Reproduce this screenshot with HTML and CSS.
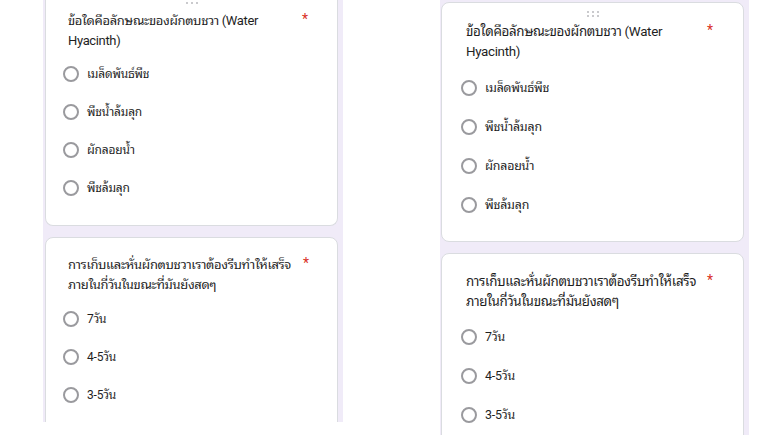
FILE: index.html
```html
<!DOCTYPE html>
<html lang="th">
<head>
<meta charset="utf-8">
<title>Google Form</title>
<link rel="stylesheet" href="styles.css">
</head>
<body>
<div class="panel panel-left">
  <div class="card card-first">
    <div class="handle"><span></span><span></span><span></span></div>
    <div class="question">
      <div class="q-text">ข้อใดคือลักษณะของผักตบชวา (Water Hyacinth)</div>
      <div class="req">*</div>
    </div>
    <div class="options">
      <div class="opt"><span class="radio"></span><span class="label">เมล็ดพันธ์พืช</span></div>
      <div class="opt"><span class="radio"></span><span class="label">พืชน้ำล้มลุก</span></div>
      <div class="opt"><span class="radio"></span><span class="label">ผักลอยน้ำ</span></div>
      <div class="opt"><span class="radio"></span><span class="label">พืชล้มลุก</span></div>
    </div>
  </div>
  <div class="card card-second">
    <div class="question">
      <div class="q-text">การเก็บและหั่นผักตบชวาเราต้องรีบทำให้เสร็จ ภายในกี่วันในขณะที่มันยังสดๆ</div>
      <div class="req">*</div>
    </div>
    <div class="options">
      <div class="opt"><span class="radio"></span><span class="label">7วัน</span></div>
      <div class="opt"><span class="radio"></span><span class="label">4-5วัน</span></div>
      <div class="opt"><span class="radio"></span><span class="label">3-5วัน</span></div>
    </div>
  </div>
</div>
<div class="panel panel-right">
  <div class="card card-first">
    <div class="handle handle-full"><span></span><span></span><span></span><span></span><span></span><span></span></div>
    <div class="question">
      <div class="q-text">ข้อใดคือลักษณะของผักตบชวา (Water Hyacinth)</div>
      <div class="req">*</div>
    </div>
    <div class="options">
      <div class="opt"><span class="radio"></span><span class="label">เมล็ดพันธ์พืช</span></div>
      <div class="opt"><span class="radio"></span><span class="label">พืชน้ำล้มลุก</span></div>
      <div class="opt"><span class="radio"></span><span class="label">ผักลอยน้ำ</span></div>
      <div class="opt"><span class="radio"></span><span class="label">พืชล้มลุก</span></div>
    </div>
  </div>
  <div class="card card-second">
    <div class="question">
      <div class="q-text">การเก็บและหั่นผักตบชวาเราต้องรีบทำให้เสร็จ ภายในกี่วันในขณะที่มันยังสดๆ</div>
      <div class="req">*</div>
    </div>
    <div class="options">
      <div class="opt"><span class="radio"></span><span class="label">7วัน</span></div>
      <div class="opt"><span class="radio"></span><span class="label">4-5วัน</span></div>
      <div class="opt"><span class="radio"></span><span class="label">3-5วัน</span></div>
    </div>
  </div>
</div>
</body>
</html>
```

FILE: styles.css
```css
* { box-sizing: border-box; }
html, body { margin: 0; padding: 0; background: #ffffff; }
body {
  width: 773px;
  height: 435px;
  overflow: hidden;
  display: flex;
  align-items: flex-start;
  font-family: Roboto, "Noto Sans Thai Looped", "Noto Sans Thai", sans-serif;
  color: #1f1f1f;
}

.panel {
  background: #f0ebf8;
  overflow: hidden;
  display: flex;
  flex-direction: column;
}
.panel-left {
  margin-left: 43px;
  width: 300px;
  height: 422px;
  padding: 0 5px 0 2px;
  gap: 11px;
}
.panel-right {
  margin-left: 97px;
  width: 309px;
  height: 435px;
  padding: 2px 5px 0 1px;
  gap: 11px;
}

.card {
  position: relative;
  background: #ffffff;
  border: 1px solid #dadce0;
  border-radius: 8px;
  flex: none;
}
.panel-left .card-first {
  border-top: none;
  border-radius: 0 0 8px 8px;
  height: 226px;
  padding: 11px 29px 0 22px;
}
.panel-left .card-second {
  height: 200px;
  padding: 17px 28px 0 22px;
}
.panel-right .card-first {
  height: 240px;
  padding: 19px 30px 0 24px;
}
.panel-right .card-second {
  height: 200px;
  padding: 18px 30px 0 24px;
}

.handle {
  position: absolute;
  top: 2px;
  left: 50%;
  transform: translateX(-50%);
  display: grid;
  grid-template-columns: repeat(3, 2px);
  gap: 2px 3px;
}
.handle span {
  width: 2px;
  height: 2px;
  border-radius: 50%;
  background: #b8b8bc;
}
.handle-full { top: 8px; }

.question {
  display: flex;
  align-items: flex-start;
}
.q-text {
  flex: 0 0 228px;
  font-size: 13px;
  letter-spacing: -0.35px;
  line-height: 20px;
}
.panel-right .q-text {
  flex-basis: 234px;
  font-size: 13.4px;
  line-height: 20px;
}
.req {
  margin-left: auto;
  color: #d93025;
  font-size: 14px;
  line-height: 16px;
}

.options {
  display: flex;
  flex-direction: column;
  margin-top: 4px;
  margin-left: -5px;
}
.panel-left .card-second .options { margin-top: 5px; }
.panel-right .options { margin-top: 6px; margin-left: -5px; }
.panel-right .card-second .options { margin-top: 5px; }

.opt {
  display: flex;
  align-items: center;
  gap: 8px;
  height: 38px;
}
.panel-right .opt { height: 39px; }

.radio {
  width: 16px;
  height: 16px;
  border: 2px solid #9a9a9e;
  border-radius: 50%;
  flex: none;
}
.label {
  font-size: 12px;
  letter-spacing: -0.2px;
  line-height: 18px;
}
.panel-right .label { font-size: 12.4px; }
```
